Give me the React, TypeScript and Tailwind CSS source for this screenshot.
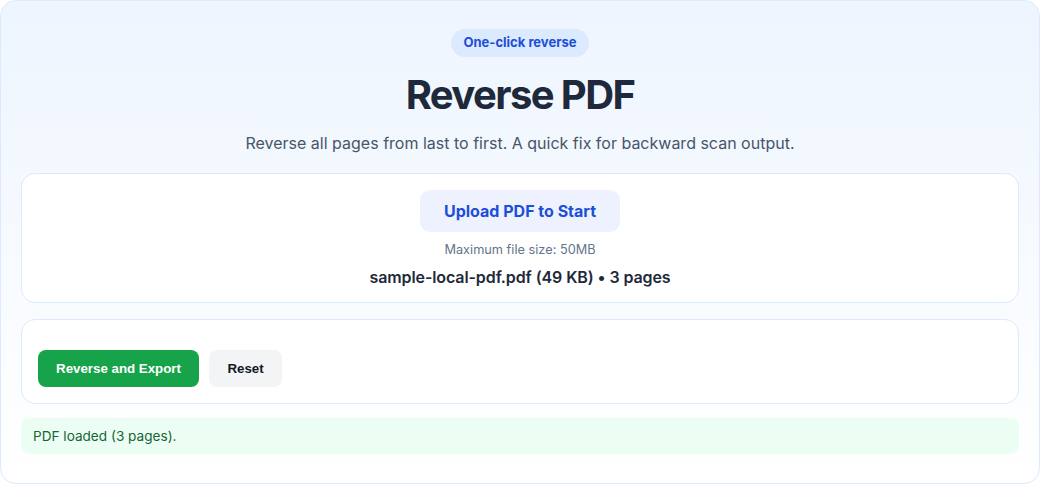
import React from "react";

export default function App() {
  return (
    <div className="w-[1040px] h-[484px] bg-white" style={{ fontFamily: "Inter, 'Noto Sans', sans-serif" }}>
      <div className="h-[484px] rounded-[16px] border border-[#dbeafe] bg-gradient-to-b from-[#eef5ff] to-white px-5 pt-[28px] flex flex-col">
        <div className="flex flex-col items-center">
          <span className="h-[28px] px-3 rounded-full bg-[#dbeafe] text-[#1d4ed8] text-[13px] font-bold flex items-center">
            One-click reverse
          </span>
          <h1 className="mt-[14px] text-[40px] leading-[48px] font-bold text-[#1e293b] tracking-[-1.6px]">
            Reverse PDF
          </h1>
          <p className="mt-[12px] text-[16px] leading-[24px] text-[#475569]">
            Reverse all pages from last to first. A quick fix for backward scan output.
          </p>
        </div>

        <div className="mt-[18px] rounded-[14px] border border-[#dbeafe] bg-white pt-4 pb-[13px] flex flex-col items-center">
          <div className="h-[42px] w-[200px] rounded-[10px] bg-[#eef2ff] text-[#1d4ed8] text-[16px] font-bold flex items-center justify-center">
            Upload PDF to Start
          </div>
          <div className="mt-[10px] text-[12.75px] leading-[16px] text-[#64748b]">Maximum file size: 50MB</div>
          <div className="mt-[7px] text-[16px] leading-[24px] font-semibold text-[#1e293b] tracking-[-0.1px]">
            sample-local-pdf.pdf (49 KB) • 3 pages
          </div>
        </div>

        <div className="mt-4 rounded-[14px] border border-[#dbeafe] bg-white px-4 pt-[30px] pb-4 flex gap-[10px]">
          <button
            className="h-[37px] w-[161px] rounded-[8px] bg-[#16a34a] text-white text-[13.3px] font-bold"
            style={{ fontFamily: "'Liberation Sans', Arial, sans-serif" }}
          >
            Reverse and Export
          </button>
          <button
            className="h-[37px] w-[73px] rounded-[8px] bg-[#f3f4f6] text-[#111827] text-[13.3px] font-bold"
            style={{ fontFamily: "'Liberation Sans', Arial, sans-serif" }}
          >
            Reset
          </button>
        </div>

        <div className="mt-[14px] h-[36px] rounded-[8px] bg-[#ecfdf3] px-3 flex items-center text-[13.6px] text-[#166534]">
          PDF loaded (3 pages).
        </div>
      </div>
    </div>
  );
}
